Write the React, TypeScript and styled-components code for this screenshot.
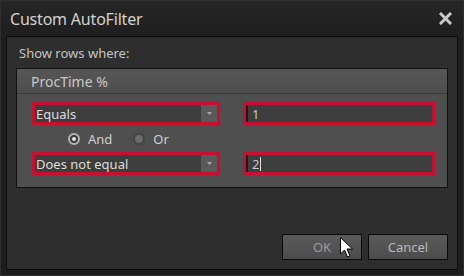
import styled, { createGlobalStyle } from "styled-components"

const Global = createGlobalStyle`
  html, body { margin: 0; padding: 0; background: #1c1c1c; }
  * { box-sizing: border-box; }
`

const Window = styled.div`
  position: relative;
  width: 464px;
  height: 276px;
  display: flex;
  flex-direction: column;
  background: linear-gradient(#262626, #1d1d1d 40px, #1d1d1d);
  border: 1px solid #2e2e2e;
  font-family: "Noto Sans", "Open Sans", sans-serif;
`

const TitleBar = styled.div`
  height: 35px;
  display: flex;
  align-items: center;
  justify-content: space-between;
  padding: 0 10px 0 9px;
`

const Title = styled.span`
  font-size: 16px;
  color: #d2d2d2;
  letter-spacing: -0.2px;
`

const CloseButton = styled.div`
  width: 16px;
  height: 16px;
  display: flex;
  align-items: center;
  justify-content: center;
`

const Content = styled.div`
  flex: 1;
  margin: 0 5px 5px 5px;
  border: 1px solid #0c0c0c;
  background: #2e2e2e;
  display: flex;
  flex-direction: column;
`

const Caption = styled.div`
  height: 31px;
  padding-left: 12px;
  display: flex;
  align-items: center;
  font-size: 13px;
  color: #c4c4c4;
`

const Group = styled.div`
  margin: 0 9px;
  border: 1px solid #111;
  background: #4f4f4f;
`

const GroupHeader = styled.div`
  height: 25px;
  display: flex;
  align-items: center;
  padding-left: 14px;
  font-size: 14px;
  color: #c8c8c8;
  background: linear-gradient(#565656, #4e4e4e);
  border-bottom: 1px solid #3a3a3a;
`

const GroupBody = styled.div`
  display: grid;
  grid-template-columns: 188px 192px;
  column-gap: 23px;
  padding: 8px 12px 12px 15px;
`

const Field = styled.div`
  height: 23px;
  border: 3px solid #c5102f;
  background: #3d3d3d;
  display: flex;
  align-items: center;
  font-size: 13px;
  color: #dcdcdc;
`

const ComboText = styled.span`
  flex: 1;
  padding-left: 1px;
`

const DropButton = styled.div`
  width: 16px;
  height: 100%;
  background: #595959;
  display: flex;
  align-items: center;
  justify-content: center;
`

const InputText = styled.span`
  padding-left: 4px;
  border-left: 2px solid #1a1a1a;
  height: 100%;
  display: flex;
  align-items: center;
  color: #bfc6cf;
`

const Caret = styled.span`
  width: 1px;
  height: 14px;
  background: #e0e0e0;
  margin-left: 1px;
`

const RadioRow = styled.div`
  grid-column: 1 / -1;
  height: 27px;
  display: flex;
  align-items: center;
  padding-left: 36px;
  gap: 21px;
`

const RadioItem = styled.label`
  display: flex;
  align-items: center;
  gap: 8px;
  font-size: 13px;
  color: #d0d0d0;
`

const RadioCircle = styled.span<{ $checked?: boolean }>`
  width: 12px;
  height: 12px;
  border-radius: 50%;
  background: ${({ $checked }) => ($checked ? "#3c3c3c" : "#6c6c6c")};
  border: 2px solid ${({ $checked }) => ($checked ? "#b4b4b4" : "#444")};
  display: flex;
  align-items: center;
  justify-content: center;
  &::after {
    content: "";
    width: 4px;
    height: 4px;
    border-radius: 50%;
    background: ${({ $checked }) => ($checked ? "#e6e6e6" : "transparent")};
  }
`

const Footer = styled.div`
  margin-top: auto;
  display: flex;
  justify-content: flex-end;
  gap: 6px;
  padding: 0 9px 9px 0;
`

const Button = styled.div<{ $dim?: boolean }>`
  width: 80px;
  height: 26px;
  border: 1px solid #0a0a0a;
  background: linear-gradient(#5a5a5a, #4c4c4c);
  display: flex;
  align-items: center;
  justify-content: center;
  font-size: 13px;
  color: ${({ $dim }) => ($dim ? "#9a9a9a" : "#b8b8b8")};
`

const Cursor = styled.svg`
  position: absolute;
  left: 339px;
  top: 236px;
`

const Arrow = () => (
  <svg width="5" height="3" viewBox="0 0 5 3">
    <path d="M0 0 H5 L2.5 3 Z" fill="#a8a8a8" />
  </svg>
)

export default function App() {
  return (
    <>
      <Global />
      <Window>
        <TitleBar>
          <Title>Custom AutoFilter</Title>
          <CloseButton>
            <svg width="13" height="13" viewBox="0 0 13 13">
              <path d="M2 2 L11 11 M11 2 L2 11" stroke="#c8c8c8" strokeWidth="3" strokeLinecap="square" />
            </svg>
          </CloseButton>
        </TitleBar>
        <Content>
          <Caption>Show rows where:</Caption>
          <Group>
            <GroupHeader>ProcTime %</GroupHeader>
            <GroupBody>
              <Field>
                <ComboText>Equals</ComboText>
                <DropButton><Arrow /></DropButton>
              </Field>
              <Field>
                <InputText>1</InputText>
              </Field>
              <RadioRow>
                <RadioItem><RadioCircle $checked />And</RadioItem>
                <RadioItem><RadioCircle />Or</RadioItem>
              </RadioRow>
              <Field>
                <ComboText>Does not equal</ComboText>
                <DropButton><Arrow /></DropButton>
              </Field>
              <Field>
                <InputText>2<Caret /></InputText>
              </Field>
            </GroupBody>
          </Group>
          <Footer>
            <Button $dim>OK</Button>
            <Button>Cancel</Button>
          </Footer>
        </Content>
        <Cursor width="13" height="21" viewBox="0 0 13 21">
          <path d="M0.5 0.5 V17 L4.5 13 L7.5 20 L10 19 L7 12 H12.5 Z" fill="#fff" stroke="#000" strokeWidth="1" />
        </Cursor>
      </Window>
    </>
  )
}
